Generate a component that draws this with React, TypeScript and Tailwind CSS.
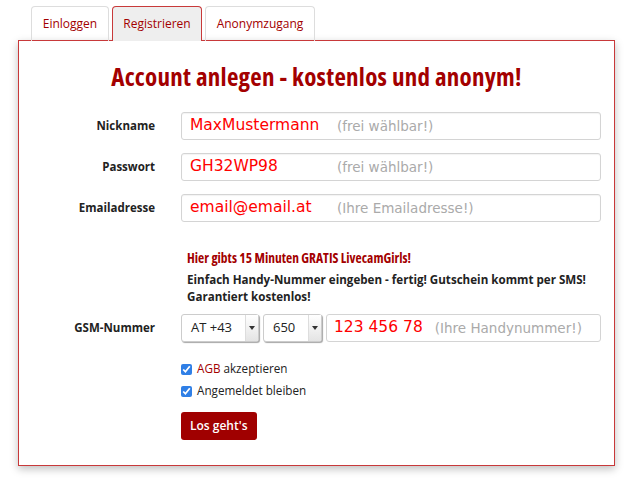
import React from "react";

function Field({ label, value, hint }: { label: string; value: string; hint: string }) {
  return (
    <div className="flex items-center h-[28px]">
      <div className="w-[136px] text-right text-[11.5px] font-bold text-[#222]">{label}</div>
      <div className="ml-[26px] flex-1 h-full flex items-center border border-[#d4d4d4] rounded-[3px] bg-white px-[8px] shadow-[inset_0_1px_1px_rgba(0,0,0,0.05)]">
        <span className="text-[#ff0000] text-[15.5px] font-['DejaVu_Sans',sans-serif] w-[147px] shrink-0">{value}</span>
        <span className="text-[#aaa] text-[13.5px] font-['DejaVu_Sans',sans-serif]">{hint}</span>
      </div>
    </div>
  );
}

function Select({ value, w }: { value: string; w: string }) {
  return (
    <div className={`${w} h-full flex border border-[#ccc] rounded-[3px] bg-white shadow-[1px_1px_1px_rgba(0,0,0,0.35)]`}>
      <div className="flex-1 flex items-center pl-[9px] text-[13px] text-[#222]">{value}</div>
      <div className="w-[13px] flex items-center justify-center border-l border-[#ddd] bg-gradient-to-b from-[#fff] to-[#e4e4e4]">
        <svg width="6" height="4" viewBox="0 0 6 4">
          <path d="M0 0h6L3 4z" fill="#333" />
        </svg>
      </div>
    </div>
  );
}

export default function App() {
  return (
    <div className="w-[640px] h-[480px] bg-white font-['Open_Sans',sans-serif] relative">
      <div className="pt-[6px] pl-[31px] flex gap-[3px] relative z-10">
        <div className="w-[78px] h-[35px] flex items-center justify-center border border-b-0 border-[#ddd] rounded-t-[4px] text-[12px] text-[#a30000]">
          Einloggen
        </div>
        <div className="w-[90px] h-[35px] flex items-center justify-center border border-b-0 border-[#c8393a] rounded-t-[4px] bg-[#eee] text-[12px] text-[#a30000]">
          Registrieren
        </div>
        <div className="w-[110px] h-[35px] flex items-center justify-center border border-b-0 border-[#ddd] rounded-t-[4px] text-[12px] text-[#a30000]">
          Anonymzugang
        </div>
      </div>
      <div className="ml-[18px] w-[597px] h-[426px] -mt-px border border-[#c8393a] shadow-[0_3px_8px_rgba(0,0,0,0.25)] pr-[13px]">
        <h1 className="mt-[18px] -mr-[13px] text-center text-[25px] leading-[34px] font-bold text-[#a30000] font-stretch-condensed tracking-[0.25px]">
          Account anlegen - kostenlos und anonym!
        </h1>
        <div className="mt-[19px] flex flex-col gap-[13px]">
          <Field label="Nickname" value="MaxMustermann" hint="(frei wählbar!)" />
          <Field label="Passwort" value="GH32WP98" hint="(frei wählbar!)" />
          <Field label="Emailadresse" value="email@email.at" hint="(Ihre Emailadresse!)" />
        </div>
        <div className="ml-[168px] mt-[27px]">
          <div className="text-[13.5px] font-bold text-[#a30000] font-stretch-condensed leading-[18px]">
            Hier gibts 15 Minuten GRATIS LivecamGirls!
          </div>
          <div className="mt-[4px] text-[11.6px] font-bold text-[#222] leading-[17px]">
            Einfach Handy-Nummer eingeben - fertig! Gutschein kommt per SMS!
            <br />
            Garantiert kostenlos!
          </div>
        </div>
        <div className="mt-[9px] flex items-center h-[28px]">
          <div className="w-[136px] text-right text-[11.5px] font-bold text-[#222]">GSM-Nummer</div>
          <div className="ml-[26px] flex-1 h-full flex gap-[4px]">
            <Select value="AT +43" w="w-[78px]" />
            <Select value="650" w="w-[59px]" />
            <div className="flex-1 h-full flex items-center border border-[#d4d4d4] rounded-[3px] bg-white px-[7px]">
              <span className="text-[#ff0000] text-[15.5px] font-['DejaVu_Sans',sans-serif] mr-[12px]">123 456 78</span>
              <span className="text-[#aaa] text-[13.5px] font-['DejaVu_Sans',sans-serif]">(Ihre Handynummer!)</span>
            </div>
          </div>
        </div>
        <div className="ml-[162px] mt-[19px] flex flex-col gap-[6px] text-[11.7px] text-[#222]">
          <label className="flex items-center gap-[5px] h-[16px]">
            <input type="checkbox" defaultChecked className="w-[11px] h-[11px] accent-[#2f7fe6]" />
            <span>
              <span className="text-[#a30000]">AGB</span> akzeptieren
            </span>
          </label>
          <label className="flex items-center gap-[5px] h-[16px]">
            <input type="checkbox" defaultChecked className="w-[11px] h-[11px] accent-[#2f7fe6]" />
            <span>Angemeldet bleiben</span>
          </label>
        </div>
        <div className="ml-[162px] mt-[13px]">
          <button className="h-[28px] px-[9px] rounded-[3px] bg-[#a00000] text-white text-[12px] font-semibold">
            Los geht's
          </button>
        </div>
      </div>
    </div>
  );
}
